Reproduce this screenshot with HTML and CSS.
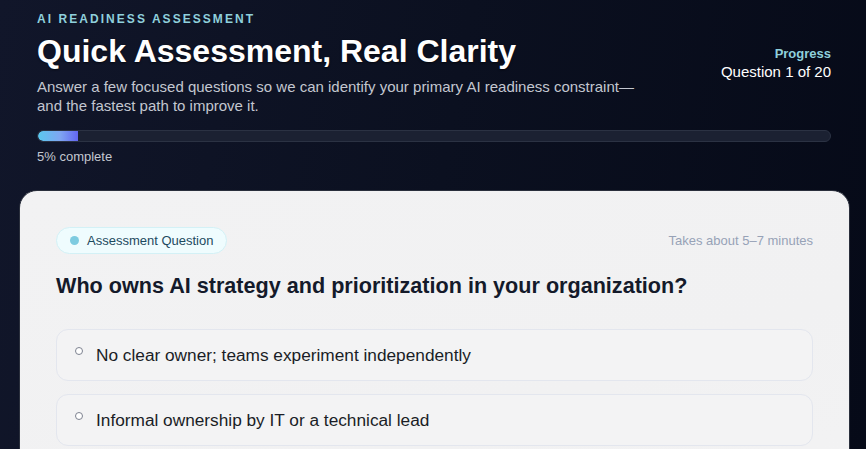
FILE: index.html
```html
<!DOCTYPE html>
<html lang="en">
<head>
<meta charset="utf-8">
<title>AI Readiness Assessment</title>
<link rel="stylesheet" href="styles.css">
</head>
<body>
<div class="page">
  <header class="hero">
    <div class="hero-row">
      <div class="hero-text">
        <div class="eyebrow">AI Readiness Assessment</div>
        <h1 class="title">Quick Assessment, Real Clarity</h1>
        <p class="subtitle">Answer a few focused questions so we can identify your primary AI readiness constraint—and the fastest path to improve it.</p>
      </div>
      <div class="progress-meta">
        <div class="progress-label">Progress</div>
        <div class="progress-count">Question 1 of 20</div>
      </div>
    </div>
    <div class="track"><div class="fill" style="width:5%"></div></div>
    <div class="pct">5% complete</div>
  </header>

  <section class="card">
    <div class="card-top">
      <span class="chip"><span class="chip-dot"></span>Assessment Question</span>
      <span class="eta">Takes about 5–7 minutes</span>
    </div>
    <h2 class="question">Who owns AI strategy and prioritization in your organization?</h2>
    <div class="options">
      <label class="option"><span class="radio"></span><span class="opt-text">No clear owner; teams experiment independently</span></label>
      <label class="option"><span class="radio"></span><span class="opt-text">Informal ownership by IT or a technical lead</span></label>
    </div>
  </section>
</div>
</body>
</html>
```

FILE: styles.css
```css
html, body {
  margin: 0;
  padding: 0;
  height: 100%;
  overflow: hidden;
}
body {
  font-family: "Liberation Sans", Arial, Helvetica, sans-serif;
  background: linear-gradient(100deg, #11162a 0%, #0b1020 50%, #060a18 100%);
  color: #ffffff;
}
.page {
  padding: 12px 16px 0 19px;
}
.hero {
  padding: 0 19px 0 18px;
}
.hero-row {
  display: flex;
  justify-content: space-between;
  align-items: flex-start;
}
.eyebrow {
  font-size: 12px;
  font-weight: 700;
  letter-spacing: 2.05px;
  text-transform: uppercase;
  color: #8fd0dc;
  line-height: 14px;
}
.title {
  margin: 6px 0 0;
  font-size: 32px;
  line-height: 38px;
  font-weight: 700;
  color: #ffffff;
  text-shadow: 0 1px 2px rgba(0, 0, 0, 0.6);
}
.subtitle {
  margin: 7px 0 0;
  max-width: 610px;
  font-size: 15px;
  line-height: 19px;
  color: #c3c7d0;
}
.progress-meta {
  text-align: right;
  margin-top: 33px;
}
.progress-label {
  font-size: 13px;
  font-weight: 700;
  color: #8fd0dc;
  line-height: 17px;
}
.progress-count {
  font-size: 15px;
  color: #ffffff;
  line-height: 19px;
}
.track {
  margin-top: 15px;
  height: 10px;
  border: 1px solid #2b3243;
  border-radius: 6px;
  background: #1b2132;
  overflow: hidden;
}
.fill {
  height: 100%;
  border-radius: 6px 0 0 6px;
  background: linear-gradient(90deg, #5ac8ef 0%, #7fa6f2 55%, #6366f1 100%);
}
.pct {
  margin-top: 7px;
  font-size: 13px;
  line-height: 15px;
  color: #c3c7d0;
}
.card {
  margin-top: 26px;
  background: linear-gradient(160deg, #f2f2f3 0%, #f1f1f2 60%, #f3f3f4 100%);
  border: 1px solid #2a2f3c;
  border-radius: 18px;
  padding: 36px 36px 40px;
  color: #111827;
  min-height: 300px;
}
.card-top {
  display: flex;
  justify-content: space-between;
  align-items: center;
}
.chip {
  display: inline-flex;
  align-items: center;
  gap: 8px;
  height: 25px;
  padding: 0 13px;
  border: 1px solid #d3f1f6;
  border-radius: 14px;
  background: #effcfe;
  font-size: 13px;
  color: #1d4a5f;
}
.chip-dot {
  width: 9px;
  height: 9px;
  border-radius: 50%;
  background: #7ecbe0;
}
.eta {
  font-size: 13px;
  color: #97a2b7;
}
.question {
  margin: 19px 0 0;
  font-size: 21.6px;
  line-height: 26px;
  font-weight: 700;
  color: #141a2a;
}
.options {
  margin-top: 30px;
  display: flex;
  flex-direction: column;
  gap: 13px;
}
.option {
  display: flex;
  align-items: center;
  height: 50px;
  padding: 0 18px;
  border: 1px solid #e3e6ee;
  border-radius: 12px;
  background: #f3f3f4;
  font-size: 17.25px;
  color: #1a1d26;
}
.radio {
  width: 6px;
  height: 6px;
  border: 1px solid #7d8290;
  border-radius: 50%;
  background: #ffffff;
  margin: -8px 13px 0 0;
  flex: none;
}
```
